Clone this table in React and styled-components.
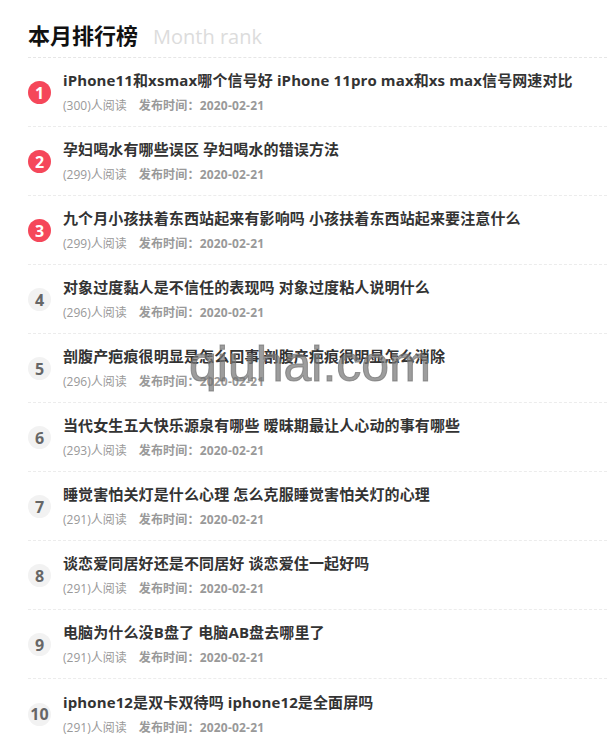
import React from "react";
import styled, { createGlobalStyle } from "styled-components";

const GlobalStyle = createGlobalStyle`
  body {
    margin: 0;
    background: #fff;
    font-family: "Open Sans", "Noto Sans CJK SC", sans-serif;
  }
`;

const articles = [
  { title: "iPhone11和xsmax哪个信号好 iPhone 11pro max和xs max信号网速对比", views: 300 },
  { title: "孕妇喝水有哪些误区 孕妇喝水的错误方法", views: 299 },
  { title: "九个月小孩扶着东西站起来有影响吗 小孩扶着东西站起来要注意什么", views: 299 },
  { title: "对象过度黏人是不信任的表现吗 对象过度粘人说明什么", views: 296 },
  { title: "剖腹产疤痕很明显是怎么回事 剖腹产疤痕很明显怎么消除", views: 296 },
  { title: "当代女生五大快乐源泉有哪些 暧昧期最让人心动的事有哪些", views: 293 },
  { title: "睡觉害怕关灯是什么心理 怎么克服睡觉害怕关灯的心理", views: 291 },
  { title: "谈恋爱同居好还是不同居好 谈恋爱住一起好吗", views: 291 },
  { title: "电脑为什么没B盘了 电脑AB盘去哪里了", views: 291 },
  { title: "iphone12是双卡双待吗 iphone12是全面屏吗", views: 291 },
];

export default function App() {
  return (
    <>
      <GlobalStyle />
      <RankWrapper>
        <Header>
          <Title>本月排行榜</Title>
          <SubTitle>Month rank</SubTitle>
        </Header>
        <List>
          {articles.map((item, i) => (
            <Row key={i}>
              <Badge top={i < 3}>{i + 1}</Badge>
              <Body>
                <ItemTitle>{item.title}</ItemTitle>
                <Meta>
                  <span>({item.views})人阅读</span>
                  <Date>发布时间：2020-02-21</Date>
                </Meta>
              </Body>
            </Row>
          ))}
        </List>
        <Watermark>qiuhai.com</Watermark>
      </RankWrapper>
    </>
  );
}

const RankWrapper = styled.section`
  position: relative;
  padding: 0 8px 0 28px;
`;

const Header = styled.div`
  display: flex;
  align-items: baseline;
  gap: 15px;
  height: 58px;
  padding-top: 21px;
  box-sizing: border-box;
  border-bottom: 1px dashed #e6e6e6;
`;

const Title = styled.h2`
  margin: 0;
  font-family: "Noto Sans CJK SC", sans-serif;
  font-size: 22px;
  font-weight: 700;
  color: #111;
  line-height: 26px;
`;

const SubTitle = styled.span`
  font-family: "Open Sans", sans-serif;
  font-size: 20px;
  color: #dcdcdc;
`;

const List = styled.ul`
  list-style: none;
  margin: 0;
  padding: 0;
`;

const Row = styled.li`
  display: flex;
  align-items: center;
  gap: 12px;
  height: 69px;
  box-sizing: border-box;
  border-bottom: 1px dashed #ececec;
  &:last-child {
    border-bottom: none;
  }
`;

const Badge = styled.span`
  flex: none;
  width: 23px;
  height: 23px;
  border-radius: 50%;
  display: flex;
  align-items: center;
  justify-content: center;
  font-size: 16px;
  font-weight: 700;
  background: ${(p) => (p.top ? "#f5475a" : "#f2f2f2")};
  color: ${(p) => (p.top ? "#fff" : "#666")};
  margin-top: 1px;
`;

const Body = styled.div`
  display: flex;
  flex-direction: column;
  gap: 7px;
`;

const ItemTitle = styled.div`
  font-size: 15px;
  font-weight: 700;
  color: #333;
  line-height: 21px;
  letter-spacing: 0.12px;
  white-space: nowrap;
`;

const Meta = styled.div`
  display: flex;
  gap: 12px;
  font-size: 12px;
  color: #999;
  line-height: 16px;
`;

const Date = styled.span`
  font-weight: 700;
  letter-spacing: 0.2px;
`;

const Watermark = styled.div`
  position: absolute;
  left: 189px;
  top: 335px;
  font-family: "Liberation Sans", sans-serif;
  font-size: 50px;
  color: rgba(115, 115, 115, 0.7);
  -webkit-text-stroke: 1px rgba(115, 115, 115, 0.7);
  pointer-events: none;
`;
